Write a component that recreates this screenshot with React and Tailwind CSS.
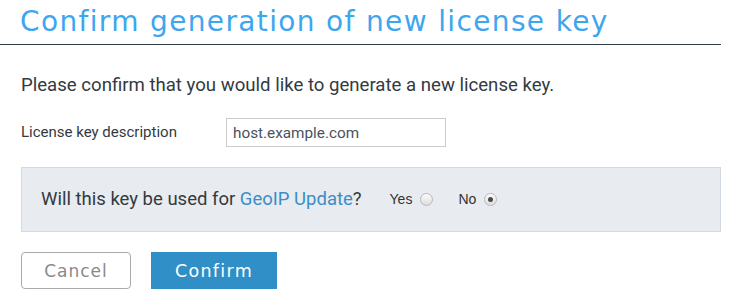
import { useState } from 'react'

const Radio = ({ checked }) => (
  <span className="inline-flex h-[13px] w-[13px] items-center justify-center rounded-full border border-[#b9b9b9] bg-gradient-to-b from-[#fbfbfb] to-[#dedede]">
    {checked && <span className="h-[5px] w-[5px] rounded-full bg-[#4a4a4a]" />}
  </span>
)

export default function App() {
  const [useGeo, setUseGeo] = useState(false)

  return (
    <div className="w-[741px] h-[308px] bg-white font-['Roboto',sans-serif] text-[#333a42]">
      {/* Title */}
      <div className="w-[721px] border-b-[1.5px] border-[#2f3d48] pl-[20px] pt-[5px] pb-[5px]">
        <h1 className="font-['DejaVu_Sans',sans-serif] text-[28px] leading-[34px] text-[#3ea6ef] tracking-[1.35px]">
          Confirm generation of new license key
        </h1>
      </div>

      <div className="pl-[21px] pr-[20px]">
        <p className="mt-[28px] text-[18.6px] leading-[24px]">
          Please confirm that you would like to generate a new license key.
        </p>

        <div className="mt-[21px] flex items-center">
          <label className="w-[205px] text-[15px]">License key description</label>
          <input
            defaultValue="host.example.com"
            className="h-[29px] w-[220px] border border-[#cccccc] px-[6px] text-[15.3px] text-[#4a525c] outline-none"
          />
        </div>

        <div className="mt-[20px] flex h-[65px] w-[700px] items-center border border-[#d3d9e0] bg-[#e8ebef] pl-[19px]">
          <span className="text-[18.5px]">
            Will this key be used for <a className="text-[#3b8ec7]">GeoIP Update</a>?
          </span>
          <span className="ml-[28px] flex items-center gap-[8px] font-['Liberation_Sans',sans-serif] text-[14px] text-[#333]" onClick={() => setUseGeo(true)}>
            Yes <Radio checked={useGeo} />
          </span>
          <span className="ml-[25px] flex items-center gap-[8px] font-['Liberation_Sans',sans-serif] text-[14px] text-[#333]" onClick={() => setUseGeo(false)}>
            No <Radio checked={!useGeo} />
          </span>
        </div>

        <div className="mt-[20px] flex gap-[20px]">
          <button className="h-[37px] w-[110px] rounded-[4px] border border-[#aaaaaa] pt-[2px] font-['DejaVu_Sans',sans-serif] text-[17px] tracking-[1px] text-[#8a8a8a]">
            Cancel
          </button>
          <button className="h-[37px] w-[126px] bg-[#2f8fc6] pt-[2px] font-['DejaVu_Sans',sans-serif] text-[17.5px] tracking-[1.3px] text-white">
            Confirm
          </button>
        </div>
      </div>
    </div>
  )
}
